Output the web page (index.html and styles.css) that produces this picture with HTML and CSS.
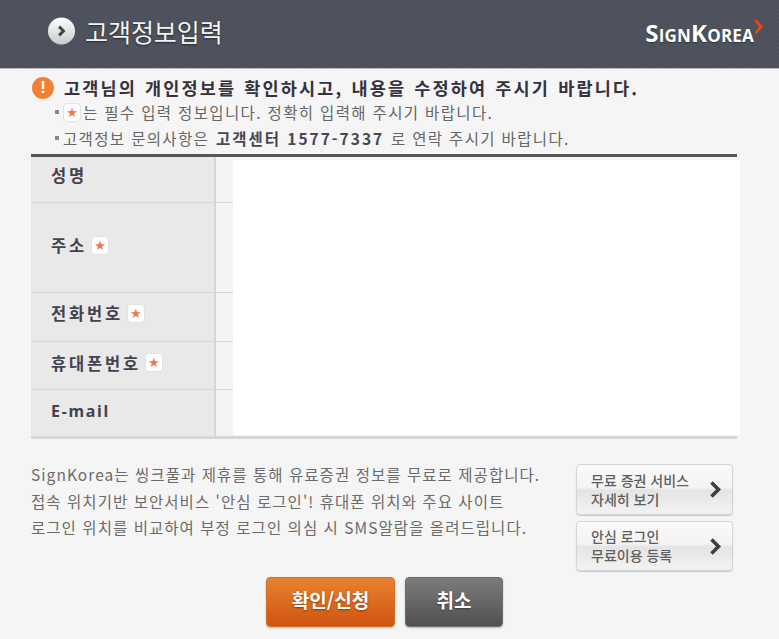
FILE: index.html
```html
<!DOCTYPE html>
<html lang="ko">
<head>
<meta charset="utf-8">
<title>고객정보입력</title>
<link rel="stylesheet" href="styles.css">
</head>
<body>
<div class="page">
  <header class="top">
    <div class="top-title">
      <span class="bullet">
        <svg viewBox="0 0 30 30" width="30" height="30"><defs><linearGradient id="g" x1="0" y1="0" x2="0" y2="1"><stop offset="0" stop-color="#fff"/><stop offset="1" stop-color="#c9c9c9"/></linearGradient></defs><circle cx="15" cy="15" r="14" fill="url(#g)"/><path d="M12.500 10.500l4.500 4.500-4.500 4.500" fill="none" stroke="#3f434c" stroke-width="3"/></svg>
      </span>
      <h1>고객정보입력</h1>
    </div>
    <div class="logo"><span class="logo-text">SignKorea</span><svg class="logo-mark" viewBox="0 0 10 14" width="10" height="14"><path d="M0.500 0h3.500l6 6.500-6.500 7.500-2-.8 4.500-6.700z" fill="#e8471b"/></svg></div>
  </header>

  <section class="notice">
    <div class="notice-head">
      <span class="alert">!</span>
      <strong>고객님의 개인정보를 확인하시고, 내용을 수정하여 주시기 바랍니다.</strong>
    </div>
    <p class="notice-line"><span class="dot"></span><span class="req"><i>★</i></span>는 필수 입력 정보입니다. 정확히 입력해 주시기 바랍니다.</p>
    <p class="notice-line"><span class="dot"></span>고객정보 문의사항은 <b>고객센터 1577-7337</b> 로 연락 주시기 바랍니다.</p>
  </section>

  <section class="form">
    <div class="row r1"><div class="label">성명</div><div class="field"></div></div>
    <div class="row r2"><div class="label">주소<span class="req"><i>★</i></span></div><div class="field"></div></div>
    <div class="row r3"><div class="label">전화번호<span class="req"><i>★</i></span></div><div class="field"></div></div>
    <div class="row r4"><div class="label">휴대폰번호<span class="req"><i>★</i></span></div><div class="field"></div></div>
    <div class="row r5"><div class="label">E-mail</div><div class="field"></div></div>
    <div class="mask"></div>
  </section>

  <section class="info">
    <p class="info-text">SignKorea는 씽크풀과 제휴를 통해 유료증권 정보를 무료로 제공합니다.<br>접속 위치기반 보안서비스 '안심 로그인'! 휴대폰 위치와 주요 사이트<br>로그인 위치를 비교하여 부정 로그인 의심 시 SMS알람을 올려드립니다.</p>
    <div class="side">
      <a class="side-btn"><span>무료 증권 서비스<br>자세히 보기</span><svg viewBox="0 0 12 17" width="12" height="17"><path d="M1.500 1.500l7 7-7 7" fill="none" stroke="#3c3f45" stroke-width="3.600"/></svg></a>
      <a class="side-btn"><span>안심 로그인<br>무료이용 등록</span><svg viewBox="0 0 12 17" width="12" height="17"><path d="M1.500 1.500l7 7-7 7" fill="none" stroke="#3c3f45" stroke-width="3.600"/></svg></a>
    </div>
  </section>

  <div class="actions">
    <a class="btn btn-ok">확인/신청</a>
    <a class="btn btn-cancel">취소</a>
  </div>
</div>
</body>
</html>
```
FILE: styles.css
```css
* { box-sizing: border-box; }
html, body { margin: 0; padding: 0; }
body {
  width: 779px;
  height: 639px;
  overflow: hidden;
  background: #f5f5f5;
  font-family: "Noto Sans CJK KR", "Noto Sans", sans-serif;
  color: #555;
}
p { margin: 0; }
.page { width: 779px; height: 639px; }

.top {
  height: 69px;
  display: flex;
  align-items: center;
  justify-content: space-between;
  padding: 0 16px 6px 47px;
  background-color: #4b505b;
  background-image: repeating-linear-gradient(45deg, rgba(255,255,255,.035) 0 1px, transparent 1px 3px);
  border-bottom: 1px solid #b8babd;
}
.top-title { display: flex; align-items: center; gap: 9px; }
.bullet { display: flex; width: 29px; height: 30px; }
.top h1 {
  margin: 0;
  font-size: 25px;
  line-height: 30px;
  font-weight: 400;
  letter-spacing: -.05px;
  color: #f2f2f2;
  text-shadow: 0 1px 2px rgba(0,0,0,.55);
}
.logo { display: flex; align-items: flex-start; padding-top: 4px; }
.logo-text {
  font-family: "Open Sans", "Noto Sans", sans-serif;
  font-variant: small-caps;
  font-weight: 700;
  font-size: 24px;
  line-height: 24px;
  letter-spacing: .2px;
  color: #fff;
  text-shadow: 0 1px 1px rgba(0,0,0,.4);
}
.logo-mark { margin: -1px 0 0 -1px; }

.notice { height: 85px; padding: 8px 0 0 32px; }
.notice-head { display: flex; align-items: center; gap: 10px; height: 22px; }
.notice-head strong {
  font-size: 17.500px;
  line-height: 22px;
  font-weight: 700;
  color: #35323f;
  letter-spacing: 2.150px;
  word-spacing: 1px;
  white-space: nowrap;
}
.alert {
  width: 22px;
  height: 22px;
  border-radius: 50%;
  background: #f47f36;
  color: #fff;
  font: 700 17px/22px "Liberation Sans", sans-serif;
  text-align: center;
}
.notice-line {
  display: flex;
  align-items: center;
  height: 26px;
  padding-left: 23px;
  font-size: 15.500px;
  letter-spacing: 1.350px;
  color: #666;
  white-space: pre-wrap;
}
.notice-line b { font-weight: 700; color: #4a4754; margin: 0 1px; letter-spacing: 2px; }
.dot { width: 4px; height: 4px; background: #888; margin-right: 4px; flex: none; }
.notice-line .req { margin: 0 2px 0 0; }

.req {
  display: inline-flex;
  align-items: center;
  justify-content: center;
  width: 18px;
  height: 19px;
  margin-left: 4px;
  background: #fff;
  border: 1px solid #e2e2e2;
  border-radius: 4px;
  flex: none;
  letter-spacing: 0;
}
.req i {
  font: 400 13px/13px "DejaVu Sans", sans-serif;
  color: #ea7a4b;
}

.form {
  position: relative;
  width: 706px;
  margin-left: 31px;
  border-top: 3px solid #565656;
  border-bottom: 2px solid #d6d6d6;
}
.row { display: flex; border-bottom: 1px solid #d6d6d6; }
.row:last-of-type { border-bottom: 0; }
.r1 { height: 46px; }
.r2 { height: 90px; }
.r3 { height: 49px; }
.r4 { height: 48px; }
.r5 { height: 47px; }
.label {
  display: flex;
  width: 185px;
  padding-left: 20px;
  background: #e9e9e9;
  border-right: 2px solid #d6d6d6;
  font-size: 16.500px;
  font-weight: 700;
  color: #45424f;
  align-items: center;
  letter-spacing: 2.800px;
}
.r1 .label { padding-bottom: 9px; }
.r2 .label { padding-bottom: 5px; }
.r3 .label { padding-bottom: 8px; }
.r4 .label { padding-bottom: 6px; }
.r5 .label { padding-bottom: 5px; font-family: "Noto Sans", sans-serif; font-size: 16px; letter-spacing: 1.700px; }
.field { flex: 1; background: #f4f4f4; }
.mask {
  position: absolute;
  left: 202px;
  top: 3px;
  width: 507px;
  height: 275px;
  background: #fff;
}

.info {
  display: flex;
  justify-content: space-between;
  height: 138px;
  padding: 22px 46px 0 31px;
}
.info-text {
  font-size: 15.500px;
  line-height: 26.500px;
  letter-spacing: 1.050px;
  color: #6b6b6b;
  white-space: nowrap;
}
.side { display: flex; flex-direction: column; gap: 6px; margin-top: 3px; }
.side-btn {
  display: flex;
  align-items: center;
  justify-content: space-between;
  width: 157px;
  height: 51px;
  padding: 0 10px 0 14px;
  border: 1px solid #d4d4d4;
  border-radius: 4px;
  background: linear-gradient(#fafafa, #f3f3f3 46%, #e4e4e4 52%, #f3f3f3 100%);
  box-shadow: 0 1px 1px rgba(0,0,0,.18);
  font-size: 14px;
  line-height: 19px;
  font-weight: 500;
  color: #5e5e5e;
}
.side-btn:last-child { height: 50px; }

.actions { display: flex; gap: 10px; padding-left: 266px; }
.btn {
  display: flex;
  align-items: center;
  justify-content: center;
  height: 50px;
  border-radius: 4px;
  font-size: 19px;
  font-weight: 700;
  color: #fff;
  padding-bottom: 5px;
  text-shadow: 0 1px 2px rgba(0,0,0,.4);
  box-shadow: 0 1px 2px rgba(0,0,0,.25);
}
.btn-ok { width: 129px; background: linear-gradient(#e9822f, #cf5410); border: 1px solid #d0702a; }
.btn-cancel { width: 98px; background: linear-gradient(#7c7c7c, #505050); border: 1px solid #6c6c6c; }
```
